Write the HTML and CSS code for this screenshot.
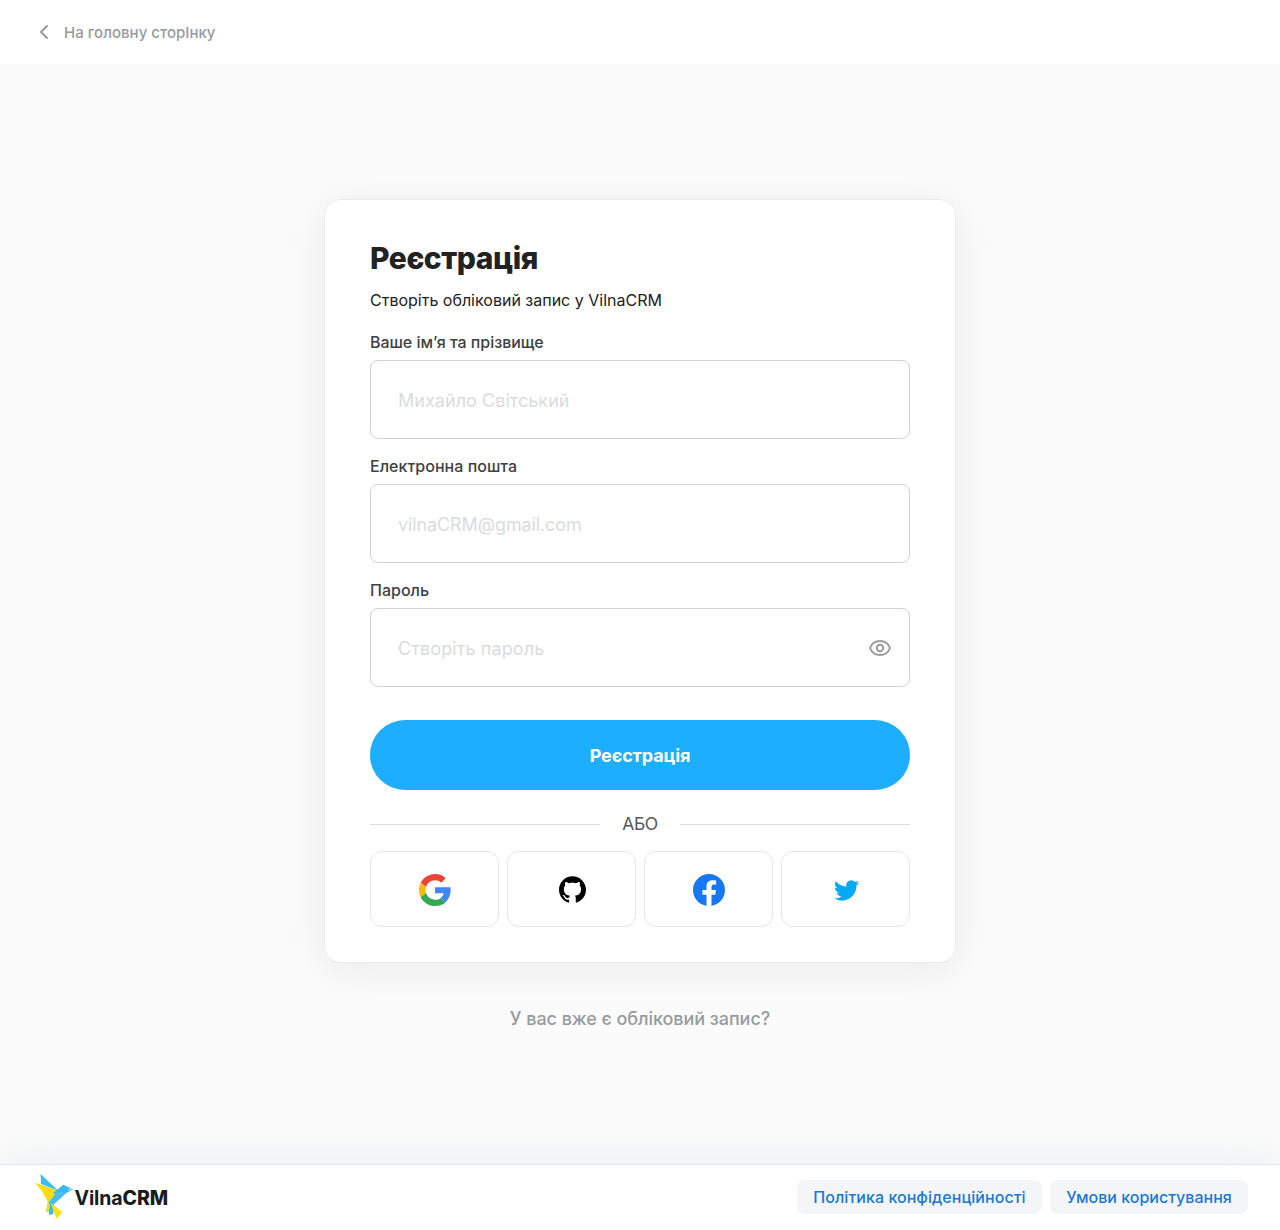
FILE: index.html
```html
<!DOCTYPE html>
<html lang="uk">
<head>
<meta charset="utf-8">
<title>VilnaCRM</title>
<link rel="stylesheet" href="styles.css">
</head>
<body>
<header class="header">
  <a class="back">
    <svg class="back-icon" width="24" height="24" viewBox="0 0 24 24" fill="none" stroke="#969b9d" stroke-width="2" stroke-linecap="round" stroke-linejoin="round"><path d="M15 6 9 12l6 6"/></svg>
    <span class="back-text">На головну сторІнку</span>
  </a>
</header>
<main class="main">
  <form class="card">
    <h1 class="title"><span>Реєстрація</span></h1>
    <p class="subtitle">Створіть обліковий запис у VilnaCRM</p>
    <label class="field"><span class="label label-name">Ваше ім’я та прізвище</span>
      <span class="box"><input class="input input-name" type="text" placeholder="Михайло Світський"></span></label>
    <label class="field"><span class="label label-email">Електронна пошта</span>
      <span class="box"><input class="input input-email" type="text" placeholder="vilnaCRM@gmail.com"></span></label>
    <label class="field"><span class="label label-password">Пароль</span>
      <span class="box"><input class="input input-password" type="password" placeholder="Створіть пароль">
        <svg width="24" height="24" viewBox="0 0 24 24" fill="none" stroke="#969b9d" stroke-width="2" stroke-linejoin="round"><path d="M2 12C3.700 7.600 7.600 5 12 5s8.300 2.600 10 7c-1.700 4.400-5.600 7-10 7S3.700 16.400 2 12Z"/><circle cx="12" cy="12" r="3.200"/></svg>
      </span></label>
    <button class="submit" type="button">Реєстрація</button>
    <div class="divider"><span class="line"></span><span class="or">АБО</span><span class="line"></span></div>
    <div class="socials">
      <a class="social"><svg width="32" height="32" viewBox="0 0 48 48"><path fill="#EA4335" d="M24 9.500c3.540 0 6.710 1.220 9.210 3.600l6.850-6.850C35.900 2.380 30.470 0 24 0 14.620 0 6.510 5.380 2.560 13.220l7.980 6.190C12.430 13.720 17.740 9.500 24 9.500z"/><path fill="#4285F4" d="M47.500 24.550c0-1.570-.15-3.090-.38-4.550H24v9.020h12.940c-.58 2.960-2.260 5.480-4.780 7.180l7.730 6c4.510-4.180 7.610-10.360 7.610-17.650z"/><path fill="#FBBC05" d="M10.530 28.590c-.48-1.450-.76-2.990-.76-4.590s.27-3.140.76-4.590l-7.980-6.190C.92 16.460 0 20.120 0 24c0 3.880.92 7.540 2.560 10.780l7.970-6.190z"/><path fill="#34A853" d="M24 48c6.480 0 11.930-2.130 15.890-5.810l-7.730-6c-2.150 1.450-4.920 2.300-8.160 2.300-6.260 0-11.570-4.220-13.470-9.910l-7.980 6.190C6.510 42.620 14.620 48 24 48z"/></svg></a>
      <a class="social social-github"><svg width="27" height="26.300" viewBox="0 0 24 23.400"><path d="M12 .297c-6.630 0-12 5.373-12 12 0 5.303 3.438 9.800 8.205 11.385.6.113.82-.258.82-.577 0-.285-.01-1.040-.015-2.040-3.338.724-4.042-1.610-4.042-1.610C4.422 18.070 3.633 17.700 3.633 17.700c-1.087-.744.084-.729.084-.729 1.205.084 1.838 1.236 1.838 1.236 1.070 1.835 2.809 1.305 3.495.998.108-.776.417-1.305.76-1.605-2.665-.3-5.466-1.332-5.466-5.930 0-1.310.465-2.380 1.235-3.220-.135-.303-.54-1.523.105-3.176 0 0 1.005-.322 3.300 1.230.96-.267 1.980-.399 3-.405 1.020.006 2.040.138 3 .405 2.280-1.552 3.285-1.230 3.285-1.230.645 1.653.24 2.873.12 3.176.765.840 1.230 1.910 1.230 3.220 0 4.610-2.805 5.625-5.475 5.920.42.360.81 1.096.81 2.220 0 1.606-.015 2.896-.015 3.286 0 .315.210.690.825.570C20.565 22.092 24 17.592 24 12.297c0-6.627-5.373-12-12-12"/></svg></a>
      <a class="social"><svg width="32" height="32" viewBox="0 0 24 24"><path fill="#1877f2" d="M24 12.073c0-6.627-5.373-12-12-12s-12 5.373-12 12c0 5.990 4.388 10.954 10.125 11.854v-8.385H7.078v-3.470h3.047V9.430c0-3.007 1.792-4.669 4.533-4.669 1.312 0 2.686.235 2.686.235v2.953H15.830c-1.491 0-1.956.925-1.956 1.874v2.250h3.328l-.532 3.470h-2.796v8.385C19.612 23.027 24 18.062 24 12.073z"/></svg></a>
      <a class="social social-twitter"><svg width="25" height="25" viewBox="0 0 24 24"><path fill="#03a9f4" d="M23.953 4.570a10 10 0 01-2.825.775 4.958 4.958 0 002.163-2.723c-.951.555-2.005.959-3.127 1.184a4.920 4.920 0 00-8.384 4.482C7.690 8.095 4.067 6.130 1.640 3.162a4.822 4.822 0 00-.666 2.475c0 1.710.870 3.213 2.188 4.096a4.904 4.904 0 01-2.228-.616v.060a4.923 4.923 0 003.946 4.827 4.996 4.996 0 01-2.212.085 4.936 4.936 0 004.604 3.417 9.867 9.867 0 01-6.102 2.105c-.390 0-.779-.023-1.170-.067a13.995 13.995 0 007.557 2.209c9.053 0 13.998-7.496 13.998-13.985 0-.210 0-.420-.015-.630A9.935 9.935 0 0024 4.590z"/></svg></a>
    </div>
  </form>
  <a class="signin"><span>У вас вже є обліковий запис?</span></a>
</main>
<footer class="footer">
  <div class="logo">
    <svg width="39" height="48" viewBox="0 0 39 48"><path fill="#3abdf8" d="M5.700 1 23.500 18 6 11z"/><path fill="#fbdc12" d="M0 9.700 23.300 17.700 13.300 29.700 6.700 17.700z"/><path fill="#38b9f5" d="m18 20 10.300-8.300 10 4.600-6.600 3.400-8 3z"/><path fill="#45bef8" d="m13.300 29.700 9-11.200 9.400 1.200L19.300 31z"/><path fill="#a2ddb9" d="m34.500 14.700 3.800 1.600-5 1.500z"/><path fill="#38b9f5" d="M14 29.700 19 31l-.7 10-4.300 1z"/><path fill="#e2df2c" d="m12.700 28.700 2.300 3-1 7-3.300.3z"/><path fill="#ffe012" d="m15.700 30.300 11.600 8.400-5.600 7.300z"/></svg>
    <span class="brand">Vilna<b>CRM</b></span>
  </div>
  <nav class="links"><a class="link policy"><span>Політика конфіденційності</span></a><a class="link terms"><span>Умови користування</span></a></nav>
</footer>
</body>
</html>
```
FILE: styles.css
```css
* { box-sizing: border-box; }
body { margin: 0; min-height: 1230px; display: flex; flex-direction: column; background: #fbfbfb; font-family: Inter, "Noto Sans", sans-serif; color: #1a1c1e; }
.header { height: 64px; padding: 0 32px; display: flex; align-items: center; background: #fff; }
.back { display: flex; align-items: center; gap: 8px; color: #969b9d; font-size: 15px; font-weight: 500; line-height: 18px; }
.back-text { padding-top: 2px; white-space: nowrap; letter-spacing: .02px; }
.main { flex: 1; display: flex; flex-direction: column; align-items: center; padding-top: 135px; }
.card { width: 632px; height: 764px; padding: 38px 45px 0; background: #fff; border: 1px solid #ebebeb; border-radius: 16px; box-shadow: 0 7px 40px rgba(215, 215, 215, .42); }
.title { margin: 0; font-size: 30px; line-height: 40px; font-weight: 800; letter-spacing: -.45px; color: #222; white-space: nowrap; }
.subtitle { margin: 9px 0 19px; font-size: 16px; line-height: 26px; color: #222; white-space: nowrap; }
.field { display: block; height: 124px; }
.label { display: block; height: 28px; line-height: 20px; font-size: 16px; font-weight: 500; color: #404142; white-space: nowrap; }
.label-name { letter-spacing: -.04px; }
.label-email { letter-spacing: .03px; }
.box { display: flex; align-items: center; height: 79px; padding: 2px 17px 0 27px; border: 1px solid #d0d4d8; border-radius: 8px; }
.box svg { margin-top: -2px; }
.input { flex: 1; min-width: 0; height: 40px; padding: 0; border: 0; outline: 0; background: none; font: 400 18px/24px Inter, "Noto Sans", sans-serif; }
.input::placeholder { color: #dadcdc; opacity: 1; }
.input-name { letter-spacing: .04px; }
.input-email { letter-spacing: -.11px; }
.input-password { letter-spacing: .1px; }
.submit { display: block; width: 540px; height: 70px; margin-top: 16px; padding: 2px 0 0; border: 0; border-radius: 57px; background: #1eaeff; color: #fff; font: 700 18px/22px Inter, "Noto Sans", sans-serif; letter-spacing: -.12px; }
.divider { display: flex; align-items: center; justify-content: space-between; height: 30px; margin-top: 19px; margin-bottom: 12px; }
.line { width: 230px; height: 1px; background: #dcdedf; }
.or { font-size: 17.500px; line-height: 22px; letter-spacing: -.4px; color: #57595b; }
.socials { display: grid; grid-template-columns: repeat(4, 129px); gap: 8px; }
.social { display: flex; height: 76px; align-items: center; justify-content: center; padding-top: 2px; border: 1px solid #e1e7ea; border-radius: 12px; }
.social-github { padding: 1px 0 0 1px; }
.social-twitter { padding: 2px 0 0 2px; }
.signin { margin-top: 44px; color: #969b9d; font-size: 18px; line-height: 24px; font-weight: 500; letter-spacing: -.06px; white-space: nowrap; }
.footer { height: 66px; padding: 0 32px 2px 35px; display: flex; align-items: center; justify-content: space-between; background: #fff; border-top: 1px solid #e1e7ea; box-shadow: 0 -5px 46px rgba(198, 209, 220, .25); }
.logo { display: flex; align-items: center; }
.brand { font-size: 19.500px; line-height: 24px; font-weight: 700; margin: 2px 0 0 .5px; letter-spacing: -.12px; }
.brand b { font-weight: 800; }
.links { display: flex; gap: 8px; }
.link { display: flex; align-items: center; justify-content: center; height: 34px; border-radius: 8px; background: #f4f5f7; color: #1b78d6; font-size: 16px; font-weight: 500; white-space: nowrap; }
.policy { width: 245px; letter-spacing: .04px; }
.terms { width: 198px; }
```
